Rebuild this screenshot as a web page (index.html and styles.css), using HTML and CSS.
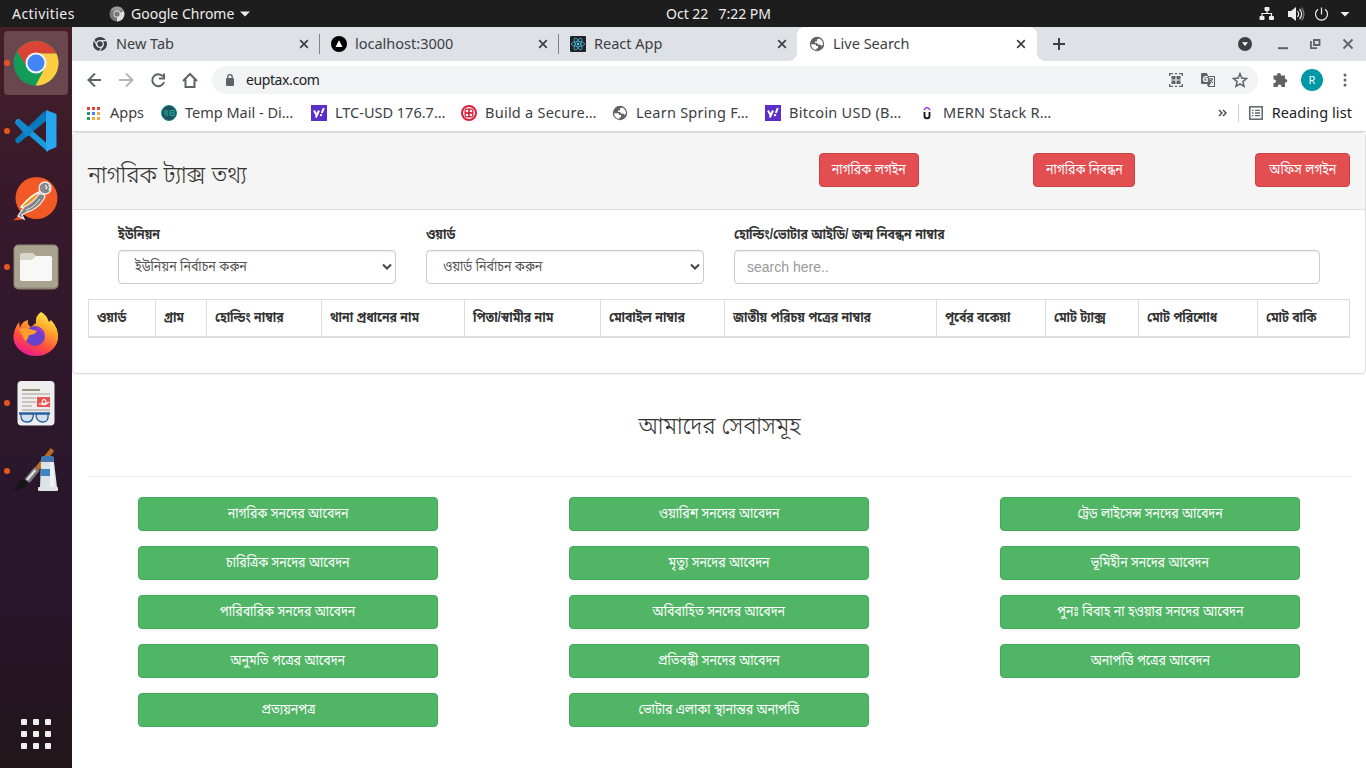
FILE: index.html
```html
<!DOCTYPE html>
<html lang="bn">
<head>
<meta charset="utf-8">
<title>Live Search</title>
<link rel="stylesheet" href="styles.css">
</head>
<body>
<svg width="0" height="0" class="defs">
  <defs>
    <symbol id="globe" viewBox="0 0 16 16"><circle cx="8" cy="8" r="7.200" fill="#5f6368"/><path d="M2 8.200H5.800Q7.200 8.200 7.200 10H9V12.200H7.500V14Q2.500 13.500 2 8.200ZM8 3.500Q9 2.300 10.500 2.800 14 4.500 14 8.500L12.500 10Q12 8.500 10.500 8.500H8.500V7H6V5.500H8Z" fill="#fff"/></symbol>
    <symbol id="close" viewBox="0 0 16 16"><path d="M4.200 4.200 11.800 11.800M11.800 4.200 4.200 11.800" stroke="#3c4043" stroke-width="1.7"/></symbol>
    <symbol id="yahoo" viewBox="0 0 16 16"><path fill="#5b2ec8" d="M0 0h16v16H0z"/><path d="M3 5.500 5.500 10M8 5.500 4.800 12.500M12.800 3 10.800 8" stroke="#fff" stroke-width="2"/><circle cx="10" cy="10.100" r="1.200" fill="#fff"/></symbol>
  </defs>
</svg>
<div class="topbar">
  <span class="activities">Activities</span>
  <svg class="mini" width="16" height="16" viewBox="0 0 16 16"><circle cx="8" cy="8" r="7.5" fill="#777"/><path d="M8 8 14.800 5A7.500 7.500 0 0 1 8 15.500Z" fill="#ddd"/><path d="M1.400 4.500A7.500 7.500 0 0 1 14.700 4.800H8Z" fill="#999"/><circle cx="8" cy="8" r="3.500" fill="#ddd"/><circle cx="8" cy="8" r="2.600" fill="#777"/></svg>
  <span class="appname">Google Chrome</span>
  <svg class="caret" width="10" height="6" viewBox="0 0 10 6"><path fill="#eee" d="M0 .5h10L5 5.500z"/></svg>
  <span class="clock"><span>Oct 22</span><span>7:22 PM</span></span>
  <svg class="tray" width="96" height="18" viewBox="0 0 96 18"><g fill="#eee"><rect x="5.500" y="2" width="5" height="4" rx="1"/><rect x=".5" y="11" width="5" height="4" rx="1"/><rect x="10" y="11" width="5" height="4" rx="1"/><path d="M29 6h3l5-4v14l-5-4h-3zM81.500 7h9L86 11.500z"/></g><g fill="none" stroke="#eee" stroke-width="1.2"><path d="M8 6v2.500M3 11V8.500h9.500V11M38.500 6c1.500 2 1.500 4 0 6M40.500 4c2.600 3 2.600 7 0 10"/><path d="M42.500 2.500c3 4 3 9 0 13" opacity=".5"/><path d="M59 4.300a6 6 0 1 0 7 0M62.500 2.500v7"/></g></svg>
</div>
<div class="desktop">
  <div class="dock">
    <div class="slot active run"><svg width="46" height="46" viewBox="0 0 46 46"><circle cx="23" cy="23" r="22.500" fill="#119d58"/><path d="M4 11.500A22.500 22.500 0 0 1 43.500 13.500H23L13.500 26Z" fill="#da4437"/><path d="M23 13.500H43.400A22.500 22.500 0 0 1 22.500 45.500L32 28Z" fill="#ffcd40"/><circle cx="23" cy="23" r="10.500" fill="#f3f3f3"/><circle cx="23" cy="23" r="8.500" fill="#4286f5"/></svg></div>
    <div class="slot run"><svg width="46" height="46" viewBox="0 0 46 46"><path d="M6 11 34 35.500 35 44 2.500 15.500 2 14Q4 10 6 11Z" fill="#169bdd"/><path d="M2.500 31 32 2.500 34 12 6 35Q4 36 2 33Z" fill="#0879bb"/><path d="M6 11 20 22.500 14 29 2.500 15.500Z" fill="#1187cc"/><path d="M33 2 43.500 6V39L33 43.500Z" fill="#27a8ee"/></svg></div>
    <div class="slot"><svg width="46" height="46" viewBox="0 0 46 46"><circle cx="23.500" cy="22" r="21" fill="#f15a24"/><path d="M0 44.500 9 37v6.500Z" fill="#e94b20"/><path d="M26 16Q17 20 8 31L13 33 25 24Z" fill="#f79525" stroke="#fff" stroke-width="1.400"/><path d="M26 18q8-1 5 5Q25 33 14 36L9 39 11 43 5 40 11 31Q20 27 26 18Z" fill="#858585" stroke="#eee" stroke-width="1.300"/><path d="M13 34Q22 31 27 23" stroke="#e4e4e4" fill="none"/><circle cx="32" cy="12" r="6" fill="#898989" stroke="#eee" stroke-width="1.300"/><path d="M32 9h5v5h-4z" fill="#ddd"/><path d="M34 9q3 3-1 6" stroke="#444" fill="none"/></svg></div>
    <div class="slot run"><svg width="46" height="46" viewBox="0 0 46 46"><rect x=".5" y=".5" width="45" height="45" rx="5" fill="#8b8475"/><rect x="1.500" y="1.500" width="43" height="42" rx="4" fill="#aaa38f"/><path d="M7 14V11q0-2 2-2h11l4 4h13q2 0 2 2v20q0 2-2 2H9q-2 0-2-2Z" fill="#d9d5ca"/><path d="M7 16h12l4-4h14q2 0 2 2v21q0 2-2 2H9q-2 0-2-2Z" fill="#f8f8f6"/></svg></div>
    <div class="slot"><svg width="46" height="48" viewBox="0 0 46 48"><defs><linearGradient id="ff" x1=".8" y1="0" x2=".3" y2="1"><stop offset="0" stop-color="#fff34c"/><stop offset=".35" stop-color="#ffa52b"/><stop offset=".7" stop-color="#ff4a3f"/><stop offset="1" stop-color="#e81896"/></linearGradient></defs><path d="M28 1Q33 3 36 11l2-2q8 8 7 19A22.500 20 0 0 1 .5 28Q0 19 6 11l1 6Q9 10 15 9q-1 5 3 7l5-4Q22 5 28 1Z" fill="url(#ff)"/><circle cx="22" cy="25" r="10" fill="#6941cf"/><path d="M6 18Q13 16 17 18l7 2q-2 4-8 4-1 5-4 6Z" fill="#ff9c2e"/><path d="M24 16q8 2 8 10-4-6-9-8Z" fill="#ad35cf"/></svg></div>
    <div class="slot run"><svg width="46" height="46" viewBox="0 0 46 46"><rect x="4.500" y="1" width="37" height="44.500" rx="4" fill="#eee"/><path d="M9 10h18" stroke="#9c9280" stroke-width="2"/><path d="M9 14h28M9 18h14M9 22h14M9 26h10M9 30h28" stroke="#bbb7ae" stroke-width="1.700"/><rect x="24" y="17" width="13" height="10" fill="#e95249"/><path d="M26 24q8 0 7-3-3-4-4 2 1 4 7-1" stroke="#fff" stroke-width="1.200" fill="none"/><path d="M6 33.500h31" stroke="#27609f" stroke-width="2.500"/><g fill="#d3dfea" stroke="#27609f" stroke-width="1.300"><path d="M8 34h11q2 0 1 3-1 5-6 5-6 0-6-6Z"/><path d="M24 34h11q1 8-5 8t-7-6Z"/></g></svg></div>
    <div class="slot run"><svg width="46" height="46" viewBox="0 0 46 46"><path d="M39.500 1.500 23 22" stroke="#b76a27" stroke-width="4.500"/><path d="M24 21 14 33" stroke="#77767a" stroke-width="6.500"/><path d="M22.500 22 14 32" stroke="#ddd" stroke-width="2.500"/><path d="M10 31 15 35Q12 42 0 42 5 38 6 33Z" fill="#151515"/><rect x="28" y="8" width="13" height="7" rx="2" fill="#4377b0"/><path d="M28 14h13l3 25H27Z" fill="#dce3e8"/><path d="M28 21h9v7h-9Z" fill="#3e83c2"/><path d="M37 14h3l2 25h-5z" fill="#f7f7f7" opacity=".75"/><rect x="25" y="39" width="20" height="4" rx="1" fill="#e1e4e5"/></svg></div>
    <div class="launcher"><i></i><i></i><i></i><i></i><i></i><i></i><i></i><i></i><i></i></div>
  </div>
  <div class="window">
    <div class="tabs">
      <div class="tab"><svg width="16" height="16" viewBox="0 0 16 16"><circle cx="8" cy="8" r="7" fill="#3c4043"/><circle cx="8" cy="8" r="3.300" fill="none" stroke="#dee1e6" stroke-width="1.300"/><path d="M8 4.700h6.500M5.200 9.700 2 4M10.800 9.700 7.500 15" stroke="#dee1e6" stroke-width="1.200"/></svg><span>New Tab</span><svg class="x" width="16" height="16"><use href="#close"/></svg></div>
      <div class="tab"><svg width="16" height="16" viewBox="0 0 16 16"><circle cx="8" cy="8" r="8"/><path d="M8 4.200 11.500 11h-7z" fill="#fff"/></svg><span>localhost:3000</span><svg class="x" width="16" height="16"><use href="#close"/></svg></div>
      <div class="tab"><svg width="16" height="16" viewBox="0 0 16 16"><rect width="16" height="16" rx="1" fill="#20232a"/><g fill="none" stroke="#4bb5cc" stroke-width=".8"><ellipse cx="8" cy="8" rx="6.600" ry="2.500"/><ellipse cx="8" cy="8" rx="6.600" ry="2.500" transform="rotate(60 8 8)"/><ellipse cx="8" cy="8" rx="6.600" ry="2.500" transform="rotate(120 8 8)"/></g><circle cx="8" cy="8" r="1.200" fill="#61dafb"/></svg><span>React App</span><svg class="x" width="16" height="16"><use href="#close"/></svg></div>
      <div class="tab current"><svg width="16" height="16"><use href="#globe"/></svg><span>Live Search</span><svg class="x" width="16" height="16"><use href="#close"/></svg></div>
      <svg class="plus" width="14" height="14" viewBox="0 0 14 14"><path d="M7 1v12M1 7h12" stroke="#3c4043" stroke-width="2"/></svg>
      <svg class="winbtns" width="120" height="16" viewBox="0 0 120 16"><circle cx="8" cy="8" r="7" fill="#3c4043"/><path d="M5 6.300h6L8 10z" fill="#fff"/><g fill="none" stroke="#5f6368" stroke-width="1.800"><path d="M41 12.200h10" stroke-width="2"/><path d="M77 4h5.500v5H77zM73.900 5v7.200H80"/><path d="m106.500 3.500 9 9m0-9-9 9"/></g></svg>
    </div>
    <div class="toolbar">
      <svg width="130" height="20" viewBox="0 0 130 20" fill="none" stroke="#5f6368" stroke-width="2"><path d="M15 10H2.500M9 3.500 2.500 10 9 16.500"/><path d="M33 10h13M40 3.500 46.500 10 40 16.500" stroke="#b4b7ba"/><path d="M77 6.500A6 6 0 1 0 78 12M78 3.500V8.500H73"/><path d="M97 11 104 4l7 7M99.500 9.500V17h9V9.500"/></svg>
      <div class="omnibox">
        <svg width="10" height="14" viewBox="0 0 10 14"><rect x="1" y="5" width="8" height="8" rx="1" fill="#5f6368"/><path d="M2.800 5.500V3.800a2.200 2.200 0 0 1 4.400 0v1.700" fill="none" stroke="#5f6368" stroke-width="1.300"/></svg>
        <span>euptax.com</span>
        <svg class="omni-icons" width="80" height="16" viewBox="0 0 80 16"><g fill="none" stroke="#5f6368" stroke-width="1.200"><path d="M.6 4V1.600H4M10 1.600h3.400V4M13.400 12v2.400H10M4 14.400H.6V12M6 1.600h2M6 14.400h2"/></g><path d="M2.500 4h4v3.500h-4zM7.500 4h4v3.500h-4zM2.500 8.500h4V12h-4zM7.500 8.500h4V12h-4z" fill="#5f6368"/><path d="M33 1h5l1 3h7v11h-7l-1-3h-5q-1 0-1-1V2q0-1 1-1Z" fill="#5f6368"/><path d="M39.500 5h5.500v9h-5l2-3Z" fill="#eee"/><text x="33.500" y="9.500" fill="#fff" class="gt">G</text><path d="M40 7h4M42 6v1M43.500 7q-1 3-2.500 4M41 8l3 3" stroke="#5f6368" fill="none"/><path d="m71 1.700 1.800 4.400 4.700.4-3.600 3.100 1.100 4.700-4-2.500-4 2.500 1.100-4.700-3.600-3.100 4.700-.4Z" fill="none" stroke="#5f6368" stroke-width="1.500"/></svg>
      </div>
      <svg class="puzzle" width="16" height="16" viewBox="0 0 16 16"><path d="M1.500 3.500H5V3a2 2 0 0 1 4 0v.5h4V7h.5a1.800 1.800 0 0 1 0 3.600H13V15H9.500v-.7a1.900 1.900 0 0 0-3.800 0v.7H1.500v-4h.7a1.800 1.800 0 0 0 0-3.600h-.7Z" fill="#5f6368"/></svg>
      <span class="avatar">R</span>
      <svg class="dots" width="4" height="16" viewBox="0 0 4 16" fill="#5f6368"><circle cx="2" cy="3" r="1.500"/><circle cx="2" cy="8" r="1.500"/><circle cx="2" cy="13" r="1.500"/></svg>
    </div>
    <div class="bookmarks">
      <div class="bm b0"><svg width="14" height="14" viewBox="0 0 14 14"><path d="M1 1h3v3H1zM6 1h3v3H6zM11 1h3v3h-3z" fill="#db4437"/><path d="M1 6h3v3H1zM1 11h3v3H1z" fill="#2a9a5b"/><path d="M6 6h3v3H6z" fill="#4285f4"/><path d="M11 6h3v3h-3zM6 11h3v3H6zM11 11h3v3h-3z" fill="#efab3b"/></svg><span>Apps</span></div>
      <div class="bm b1"><svg width="16" height="16" viewBox="0 0 16 16"><circle cx="8" cy="8" r="7.500" fill="#235064" stroke="#158a83"/><path d="M3 6h4M3 8h4M4 10h3M9 5.500h4v5H9zM9 8h4" stroke="#17b596" fill="none"/></svg><span>Temp Mail - Di…</span></div>
      <div class="bm b2"><svg width="16" height="16"><use href="#yahoo"/></svg><span>LTC-USD 176.7…</span></div>
      <div class="bm b3"><svg width="16" height="16" viewBox="0 0 16 16"><circle cx="8" cy="8" r="7" fill="none" stroke="#d9203a" stroke-width="2"/><rect x="3.500" y="3.500" width="9" height="9" rx="2.500" fill="#d9203a"/><g fill="#fff"><circle cx="6" cy="6" r="1.300"/><circle cx="10" cy="6" r="1.300"/><circle cx="6" cy="10" r="1.300"/><circle cx="10" cy="10" r="1.300"/></g></svg><span>Build a Secure…</span></div>
      <div class="bm b4"><svg width="16" height="16"><use href="#globe"/></svg><span>Learn Spring F…</span></div>
      <div class="bm b5"><svg width="16" height="16"><use href="#yahoo"/></svg><span>Bitcoin USD (B…</span></div>
      <div class="bm b6"><svg width="16" height="16" viewBox="0 0 16 16" fill="none"><path d="M5 5q3-5 6 0" stroke="#a435f0" stroke-width="1.500"/><path d="M5.500 7v4q0 2.300 2.500 2.300t2.500-2.300V7" stroke="#111" stroke-width="1.800"/></svg><span>MERN Stack R…</span></div>
      <svg class="more" width="10" height="8" viewBox="0 0 10 8"><path d="m1 1 3 3-3 3M5 1l3 3-3 3" fill="none" stroke="#444" stroke-width="1.400"/></svg>
      <div class="reading"><svg width="14" height="14" viewBox="0 0 14 14"><rect x=".8" y=".8" width="12.400" height="12.400" fill="none" stroke="#5f6368" stroke-width="1.500"/><path d="M3 4.300h1.500M6 4.300h5M3 7h1.500M6 7h5M3 9.700h1.500M6 9.700h5" stroke="#5f6368" stroke-width="1.300"/></svg><span>Reading list</span></div>
    </div>
    <div class="page">
      <div class="panel">
        <div class="panel-heading">
          <h3><span>নাগরিক ট্যাক্স তথ্য</span></h3>
          <a class="btn red r1"><span>নাগরিক লগইন</span></a><a class="btn red r2"><span>নাগরিক নিবন্ধন</span></a><a class="btn red r3"><span>অফিস লগইন</span></a>
        </div>
        <div class="panel-body">
          <div class="filters">
            <div class="field"><label>ইউনিয়ন</label><div class="control select"><span>ইউনিয়ন নির্বাচন করুন</span><svg width="12" height="8" viewBox="0 0 12 8"><path d="m2 1.500 4 4 4-4" fill="none" stroke="#444" stroke-width="2"/></svg></div></div>
            <div class="field"><label>ওয়ার্ড</label><div class="control select"><span>ওয়ার্ড নির্বাচন করুন</span><svg width="12" height="8" viewBox="0 0 12 8"><path d="m2 1.500 4 4 4-4" fill="none" stroke="#444" stroke-width="2"/></svg></div></div>
            <div class="field"><label>হোল্ডিং/ভোটার আইডি/ জন্ম নিবন্ধন নাম্বার</label><input class="control" placeholder="search here.."></div>
          </div>
          <div class="thead"><div><span>ওয়ার্ড</span></div><div><span>গ্রাম</span></div><div><span>হোল্ডিং নাম্বার</span></div><div><span>থানা প্রধানের নাম</span></div><div><span>পিতা/স্বামীর নাম</span></div><div><span>মোবাইল নাম্বার</span></div><div><span>জাতীয় পরিচয় পত্রের নাম্বার</span></div><div><span>পূর্বের বকেয়া</span></div><div><span>মোট ট্যাক্স</span></div><div><span>মোট পরিশোধ</span></div><div><span>মোট বাকি</span></div></div>
        </div>
      </div>
      <h3 class="title"><span>আমাদের সেবাসমূহ</span></h3>
      <div class="services">
        <a class="btn green"><span>নাগরিক সনদের আবেদন</span></a><a class="btn green"><span>ওয়ারিশ সনদের আবেদন</span></a><a class="btn green"><span>ট্রেড লাইসেন্স সনদের আবেদন</span></a>
        <a class="btn green"><span>চারিত্রিক সনদের আবেদন</span></a><a class="btn green"><span>মৃত্যু সনদের আবেদন</span></a><a class="btn green"><span>ভূমিহীন সনদের আবেদন</span></a>
        <a class="btn green"><span>পারিবারিক সনদের আবেদন</span></a><a class="btn green"><span>অবিবাহিত সনদের আবেদন</span></a><a class="btn green"><span>পুনঃ বিবাহ না হওয়ার সনদের আবেদন</span></a>
        <a class="btn green"><span>অনুমতি পত্রের আবেদন</span></a><a class="btn green"><span>প্রতিবন্ধী সনদের আবেদন</span></a><a class="btn green"><span>অনাপত্তি পত্রের আবেদন</span></a>
        <a class="btn green"><span>প্রত্যয়নপত্র</span></a><a class="btn green"><span>ভোটার এলাকা স্থানান্তর অনাপত্তি</span></a>
      </div>
    </div>
  </div>
</div>
</body>
</html>
```
FILE: styles.css
```css
* { box-sizing: border-box; }
body { margin: 0; width: 1366px; height: 768px; overflow: hidden; background: #fff; font-family: "Noto Sans", "Open Sans", sans-serif; font-size: 14.5px; color: #3c4043; white-space: nowrap; }
svg { display: block; flex: none; }
.defs { position: absolute; }
.topbar { height: 27px; background: #1d1d1d; color: #eee; display: flex; align-items: center; position: relative; font-size: 14px; }
.activities { margin-left: 12px; width: 97px; letter-spacing: .45px; }
.appname { margin-left: 6px; width: 109px; }
.clock { margin-left: 416px; display: flex; gap: 10px; width: 120px; padding-bottom: 1px; }
.tray { margin-left: auto; margin-right: 11px; }
.desktop { display: flex; height: 741px; }
.dock { width: 72px; flex: none; background: linear-gradient(#461f28, #38192b 22%, #2c172b 55%, #28162a 78%, #211519); display: flex; flex-direction: column; padding: 4px 4px 17px; gap: 4px; }
.slot { height: 64px; display: flex; align-items: center; justify-content: center; border-radius: 4px; position: relative; }
.slot.active { background: #6a474e; }
.slot.run::before { content: ""; position: absolute; left: 0; top: 29px; width: 6px; height: 6px; border-radius: 50%; background: #e95420; }
.launcher { margin: auto auto 0; display: grid; grid-template-columns: repeat(3, 6px); gap: 6px; padding-bottom: 2px; }
.launcher i { height: 6px; background: #eee; border-radius: 1px; }
.window { width: 1294px; }
.tabs { height: 34px; background: #dee1e6; display: flex; align-items: center; }
.tab { width: 239px; height: 34px; display: flex; align-items: center; padding: 0 8px 0 11px; position: relative; }
.tab:first-child { width: 248px; padding-left: 20px; }
.tab > span { margin-left: 8px; padding-bottom: 2px; }
.tab .x { margin-left: auto; }
.tab:nth-child(-n+2)::after { content: ""; position: absolute; right: 0; top: 7px; width: 1px; height: 20px; background: #808489; }
.tab.current { background: #fff; border-radius: 8px 8px 0 0; width: 240px; margin-left: -1px; padding-left: 12px; }
.tab.current::before, .tab.current::after { content: ""; position: absolute; bottom: 0; width: 8px; height: 8px; }
.tab.current::before { left: -8px; background: radial-gradient(circle at 0 0, transparent 7.5px, #fff 8px); }
.tab.current::after { right: -8px; background: radial-gradient(circle at 100% 0, transparent 7.5px, #fff 8px); }
.plus { margin-left: 15px; }
.winbtns { margin-left: auto; margin-right: 9px; }
.toolbar { height: 37px; display: flex; align-items: center; padding-left: 14px; }
.omnibox { margin-left: -4px; width: 1046px; height: 28px; border-radius: 14px; background: #f1f3f4; display: flex; align-items: center; padding: 0 9px 0 13px; color: #202124; font-size: 14px; letter-spacing: -.4px; }
.omnibox span { margin-left: 11px; }
.omni-icons { margin-left: auto; }
.gt { font-size: 8px; font-weight: 700; }
.puzzle { margin-left: 14px; }
.avatar { margin-left: 13px; width: 22px; height: 22px; border-radius: 50%; background: #0097a7; color: #fff; text-align: center; font-size: 11px; line-height: 22px; }
.dots { margin-left: 20px; }
.bookmarks { height: 34px; border-bottom: 1px solid #d7d9dc; display: flex; align-items: center; padding: 0 14px 4px; font-size: 14.5px; }
.bookmarks span { padding-bottom: 2px; }
.bm { display: flex; align-items: center; gap: 8px; flex: none; }
.b3, .b4, .b5, .b6 { letter-spacing: .25px; }
.b0 { width: 75px; gap: 10px; } .b1 { width: 150px; } .b2 { width: 150px; } .b3 { width: 151px; } .b4 { width: 153px; } .b5 { width: 154px; } .b6 { width: 134px; }
.more { margin-left: 165px; }
.reading { margin-left: auto; border-left: 1px solid #cdcfd2; height: 18px; padding-left: 10px; display: flex; align-items: center; gap: 9px; color: #202124; letter-spacing: .08px; }
.page { font-family: "Liberation Sans", "Noto Sans Bengali", sans-serif; color: #333; font-size: 14px; }
.page span { display: inline-block; transform: scaleX(.875); transform-origin: 0 50%; }
.panel { height: 242px; border: 1px solid #ddd; border-radius: 4px; box-shadow: 0 1px 1px rgba(0,0,0,.05); }
.panel-heading { height: 77px; background: #f5f5f5; border-bottom: 1px solid #ddd; padding: 20px 15px; display: flex; }
h3 { font-size: 24px; font-weight: 300; line-height: 26px; margin: 0; }
.panel-heading h3 { width: 731px; padding-top: 9px; }
.page h3 span { transform: scaleX(.936); }
.page .title span, .page .btn span { transform-origin: 50% 50%; }
.btn { display: block; height: 34px; border-radius: 4px; border: 1px solid; line-height: 30px; text-align: center; color: #fff; flex: none; }
.page .btn span { transform: scaleX(.885); }
.red { background: #e34e51; border-color: #cb4346; }
.r1 { width: 100px; } .r2 { width: 102px; margin-left: 114px; } .r3 { width: 95px; margin-left: 120px; }
.panel-body { padding: 13px 15px; }
.filters { display: grid; grid-template-columns: 278px 278px 586px; gap: 30px; padding-left: 30px; }
label { display: block; font-weight: 700; height: 27px; line-height: 22px; transform: scaleX(.875); transform-origin: 0 50%; }
.control { display: flex; align-items: center; width: 100%; height: 34px; border: 1px solid #ccc; border-radius: 4px; padding: 0 12px; font-family: "Liberation Sans", "Noto Sans Bengali", sans-serif; font-size: 14px; color: #555; box-shadow: inset 0 1px 1px rgba(0,0,0,.075); background: #fff; }
.control::placeholder { color: #999; }
.select { justify-content: space-between; padding: 0 2px 0 16px; }
.page .select span { transform: scaleX(.89); }
.thead { margin-top: 15px; width: 1262px; height: 39px; display: grid; grid-template-columns: 67px 51px 115px 143px 136px 124px 212px 109px 93px 119px 93px; border: solid #ddd; border-width: 1px 0 2px; font-weight: 700; line-height: 34px; }
.thead div { border-left: 1px solid #ddd; padding-left: 8px; }
.thead div:last-child { border-right: 1px solid #ddd; }
.title { margin: 39px 15px 0 16px; height: 64px; border-bottom: 1px solid #eee; text-align: center; }
.services { padding: 20px 66px; display: grid; grid-template-columns: repeat(3, 300px); column-gap: 131px; row-gap: 15px; }
.green { background: #51b566; border-color: #43a95b; }
```
